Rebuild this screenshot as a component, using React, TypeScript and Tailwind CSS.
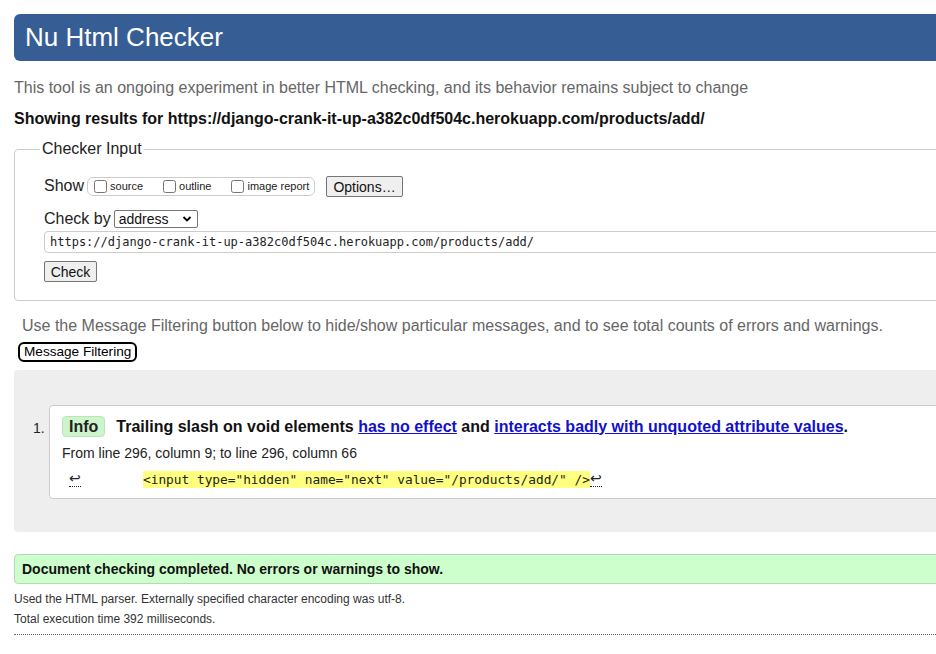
import React from "react";

const sans = "font-['Liberation_Sans',Arial,sans-serif]";
const mono = "font-['DejaVu_Sans_Mono','Liberation_Mono',monospace]";

const url = "https://django-crank-it-up-a382c0df504c.herokuapp.com/products/add/";

const CheckItem = ({ label }: { label: string }) => (
  <label className="flex items-center gap-[3px] text-[11px] text-[#222]">
    <input type="checkbox" className="m-0 h-[13px] w-[13px]" />
    <span>{label}</span>
  </label>
);

const Chevron = () => (
  <svg width="10" height="10" viewBox="0 0 10 10">
    <path d="M1.5 3 L5 6.5 L8.5 3" fill="none" stroke="#000" strokeWidth="1.8" />
  </svg>
);

const ReturnMark = () => (
  <span className="inline-flex flex-col items-center leading-none">
    <span className="text-[14px] text-[#222]">↩</span>
    <span className="mt-[1px] w-[12px] border-t border-dotted border-[#222]" />
  </span>
);

export default function App() {
  return (
    <div className={`w-[936px] h-[654px] overflow-hidden bg-white ${sans}`}>
      <div className="w-[990px] pl-[14px] pt-[14px]">
        <h1 className="flex h-[47px] items-center rounded-l-[6px] bg-[#375d95] pl-[11px] text-[26px] text-white">
          Nu Html Checker
        </h1>

        <p className="mt-[18px] h-[18px] text-[16px] leading-[18px] text-[#666]">
          This tool is an ongoing experiment in better HTML checking, and its behavior remains subject to change
        </p>
        <p className="mt-[13px] h-[18px] text-[16px] font-bold leading-[18px] text-[#111]">
          Showing results for {url}
        </p>

        <fieldset className="mt-[12px] h-[161px] rounded-l-[4px] border border-[#ccc] pl-[29px]">
          <legend className="-ml-[4px] px-[2px] text-[16px] leading-[18px] text-[#222]">
            Checker Input
          </legend>

          <div className="mt-[17px] flex h-[22px] items-center">
            <span className="text-[16px] text-[#222]">Show</span>
            <div className="ml-[3px] flex h-[19px] w-[228px] items-center gap-[20px] rounded-[6px] border border-[#ccc] pl-[6px]">
              <CheckItem label="source" />
              <CheckItem label="outline" />
              <CheckItem label="image report" />
            </div>
            <button className="ml-[11px] h-[21px] w-[77px] rounded-[2px] border border-[#767676] bg-[#efefef] text-[14px] text-[#111]">
              Options…
            </button>
          </div>

          <div className="mt-[12px] flex h-[20px] items-center">
            <span className="text-[16px] text-[#222]">Check by</span>
            <div className="ml-[3px] flex h-[18px] w-[84px] items-center justify-between rounded-[2px] border border-[#767676] pl-[4px] pr-[5px] text-[14px] text-[#111]">
              <span>address</span>
              <Chevron />
            </div>
          </div>

          <div className={`mt-[2px] flex h-[22px] items-center rounded-l-[4px] border border-[#ccc] pl-[5px] text-[12px] text-[#222] ${mono}`}>
            {url}
          </div>

          <button className="mt-[8px] h-[21px] w-[53px] rounded-[2px] border border-[#767676] bg-[#efefef] text-[14px] text-[#111]">
            Check
          </button>
        </fieldset>

        <p className="mt-[16px] ml-[8px] h-[18px] text-[16px] leading-[18px] text-[#666]">
          Use the Message Filtering button below to hide/show particular messages, and to see total counts of errors and warnings.
        </p>
        <button className="mt-[7px] ml-[4px] flex h-[20px] items-center rounded-[6px] border-2 border-black bg-white px-[4px] text-[13.6px] text-black">
          Message Filtering
        </button>

        <div className="mt-[8px] h-[162px] rounded-l-[4px] bg-[#eee] pt-[35px]">
          <ol className="flex">
            <span className="w-[35px] pt-[16px] pl-[19px] text-[14px] leading-[14px] text-[#222]">1.</span>
            <li className="h-[94px] flex-1 rounded-l-[4px] border border-[#ccc] bg-white pl-[12px]">
              <div className="mt-[10px] flex h-[21px] items-center text-[16px] font-bold">
                <span className="flex h-[21px] items-center rounded-[4px] border border-[#b8e6b8] bg-[#ccf5cc] px-[6px] text-[#222]">
                  Info
                </span>
                <span className="ml-[11px] text-[#111]">
                  Trailing slash on void elements{" "}
                  <a className="text-[#1111cc] underline">has no effect</a> and{" "}
                  <a className="text-[#1111cc] underline">interacts badly with unquoted attribute values</a>.
                </span>
              </div>
              <p className="mt-[8px] h-[16px] text-[14px] leading-[16px] text-[#222]">
                From line 296, column 9; to line 296, column 66
              </p>
              <div className="mt-[8px] flex h-[20px] items-center pl-[7px]">
                <ReturnMark />
                <span className={`ml-[62px] bg-[#ffff80] text-[12.8px] leading-[17px] text-[#222] ${mono}`}>
                  {'<input type="hidden" name="next" value="/products/add/" />'}
                </span>
                <ReturnMark />
              </div>
            </li>
          </ol>
        </div>

        <div className="mt-[22px] flex h-[30px] items-center rounded-l-[4px] border border-[#b5d8b5] bg-[#ccffcc] pl-[7px] text-[14px] font-bold text-[#111]">
          Document checking completed. No errors or warnings to show.
        </div>

        <p className="mt-[8px] h-[14px] text-[12px] leading-[14px] text-[#333]">
          Used the HTML parser. Externally specified character encoding was utf-8.
        </p>
        <p className="mt-[6px] h-[14px] text-[12px] leading-[14px] text-[#333]">
          Total execution time 392 milliseconds.
        </p>
        <div className="mt-[8px] border-t border-dotted border-[#666]" />
      </div>
    </div>
  );
}
